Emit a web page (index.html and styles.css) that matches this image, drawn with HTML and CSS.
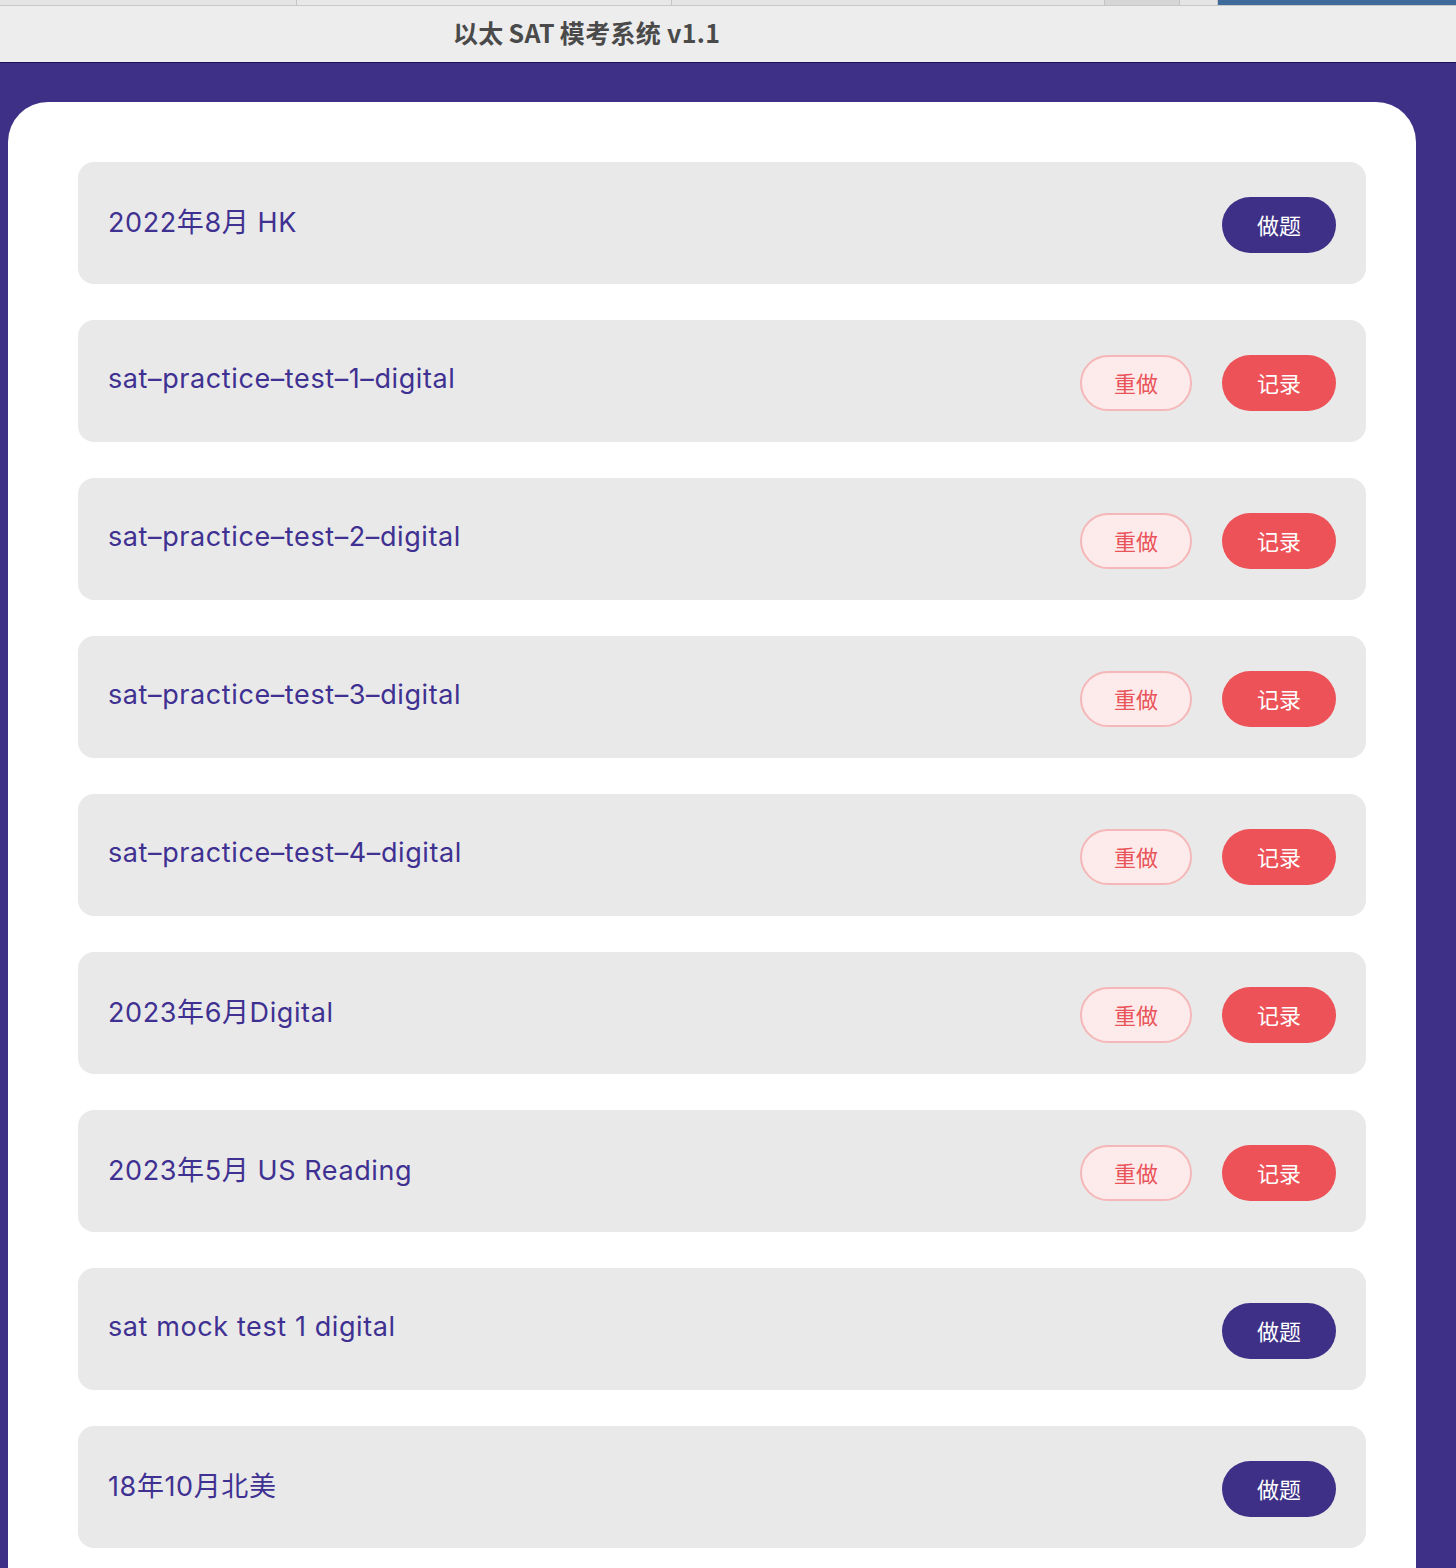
FILE: index.html
```html
<!DOCTYPE html>
<html lang="zh">
<head>
<meta charset="utf-8">
<title>以太SAT模考系统 v1.1</title>
<link rel="stylesheet" href="styles.css">
</head>
<body>
<div class="tabs">
  <div class="tab t1"></div>
  <div class="tab t2"></div>
  <div class="tab t3"></div>
  <div class="tab t4"></div>
  <div class="tab t5"></div>
  <div class="tab t6"></div>
</div>
<header class="titlebar"><span class="title">以太<span class="gap">SAT</span>模考系统 v1.1</span></header>
<main class="stage">
  <section class="card">
    <div class="row"><span class="name">2022年8月 HK</span><div class="actions"><button class="btn primary">做题</button></div></div>
    <div class="row"><span class="name">sat–practice–test–1–digital</span><div class="actions"><button class="btn ghost">重做</button><button class="btn danger">记录</button></div></div>
    <div class="row"><span class="name">sat–practice–test–2–digital</span><div class="actions"><button class="btn ghost">重做</button><button class="btn danger">记录</button></div></div>
    <div class="row"><span class="name">sat–practice–test–3–digital</span><div class="actions"><button class="btn ghost">重做</button><button class="btn danger">记录</button></div></div>
    <div class="row"><span class="name">sat–practice–test–4–digital</span><div class="actions"><button class="btn ghost">重做</button><button class="btn danger">记录</button></div></div>
    <div class="row"><span class="name">2023年6月Digital</span><div class="actions"><button class="btn ghost">重做</button><button class="btn danger">记录</button></div></div>
    <div class="row"><span class="name">2023年5月 US Reading</span><div class="actions"><button class="btn ghost">重做</button><button class="btn danger">记录</button></div></div>
    <div class="row"><span class="name">sat mock test 1 digital</span><div class="actions"><button class="btn primary">做题</button></div></div>
    <div class="row"><span class="name">18年10月北美</span><div class="actions"><button class="btn primary">做题</button></div></div>
  </section>
</main>
</body>
</html>
```

FILE: styles.css
```css
html, body {
  margin: 0;
  padding: 0;
  height: 1568px;
  overflow: hidden;
  background: #3e3087;
  font-family: "Inter", "Noto Sans CJK SC", sans-serif;
}
.tabs {
  display: flex;
  height: 5px;
  background: #e4e4e4;
  border-bottom: 1px solid #c8c8c8;
}
.tab { height: 5px; border-right: 1px solid #c4c4c4; }
.t1 { width: 296px; }
.t2 { width: 374px; background: #e8e8e8; }
.t3 { width: 432px; }
.t4 { width: 74px; background: #d6d6d6; }
.t5 { width: 37px; }
.t6 { flex: 1; background: #3f6a9c; border-right: 0; }
.titlebar {
  height: 56px;
  background: #ededed;
  border-bottom: 1px solid #1b0f5a;
  display: flex;
  align-items: center;
  padding-left: 453px;
}
.title {
  font-family: "Noto Sans CJK SC", sans-serif;
  font-weight: 700;
  font-size: 25px;
  letter-spacing: 0.3px;
  color: #4a4a4a;
  margin-top: -5px;
}
.gap { margin: 0 5px; }
.stage {
  padding: 39px 40px 0 8px;
}
.card {
  background: #fff;
  border-radius: 40px 40px 0 0;
  padding: 60px 50px 40px 70px;
  display: flex;
  flex-direction: column;
  gap: 36px;
}
.row {
  height: 122px;
  background: #e9e9e9;
  border-radius: 16px;
  display: flex;
  align-items: center;
  justify-content: space-between;
  padding: 0 30px;
}
.name {
  font-family: "Inter", "Noto Sans CJK SC", sans-serif;
  font-size: 27px;
  letter-spacing: 0.6px;
  color: #3f3192;
  margin-top: -6px;
}
.actions {
  display: flex;
  gap: 30px;
  margin-top: 4px;
}
.btn {
  width: 114px;
  height: 56px;
  border-radius: 28px;
  border: 0;
  font-family: "Noto Sans CJK SC", sans-serif;
  font-size: 22px;
  padding: 0 0 2px;
  display: flex;
  align-items: center;
  justify-content: center;
}
.primary { background: #3e3087; color: #fff; }
.danger { background: #ec5257; color: #fff; }
.ghost {
  width: 112px;
  background: #fdebeb;
  border: 2px solid #f5b7b8;
  color: #e9545a;
}
```
